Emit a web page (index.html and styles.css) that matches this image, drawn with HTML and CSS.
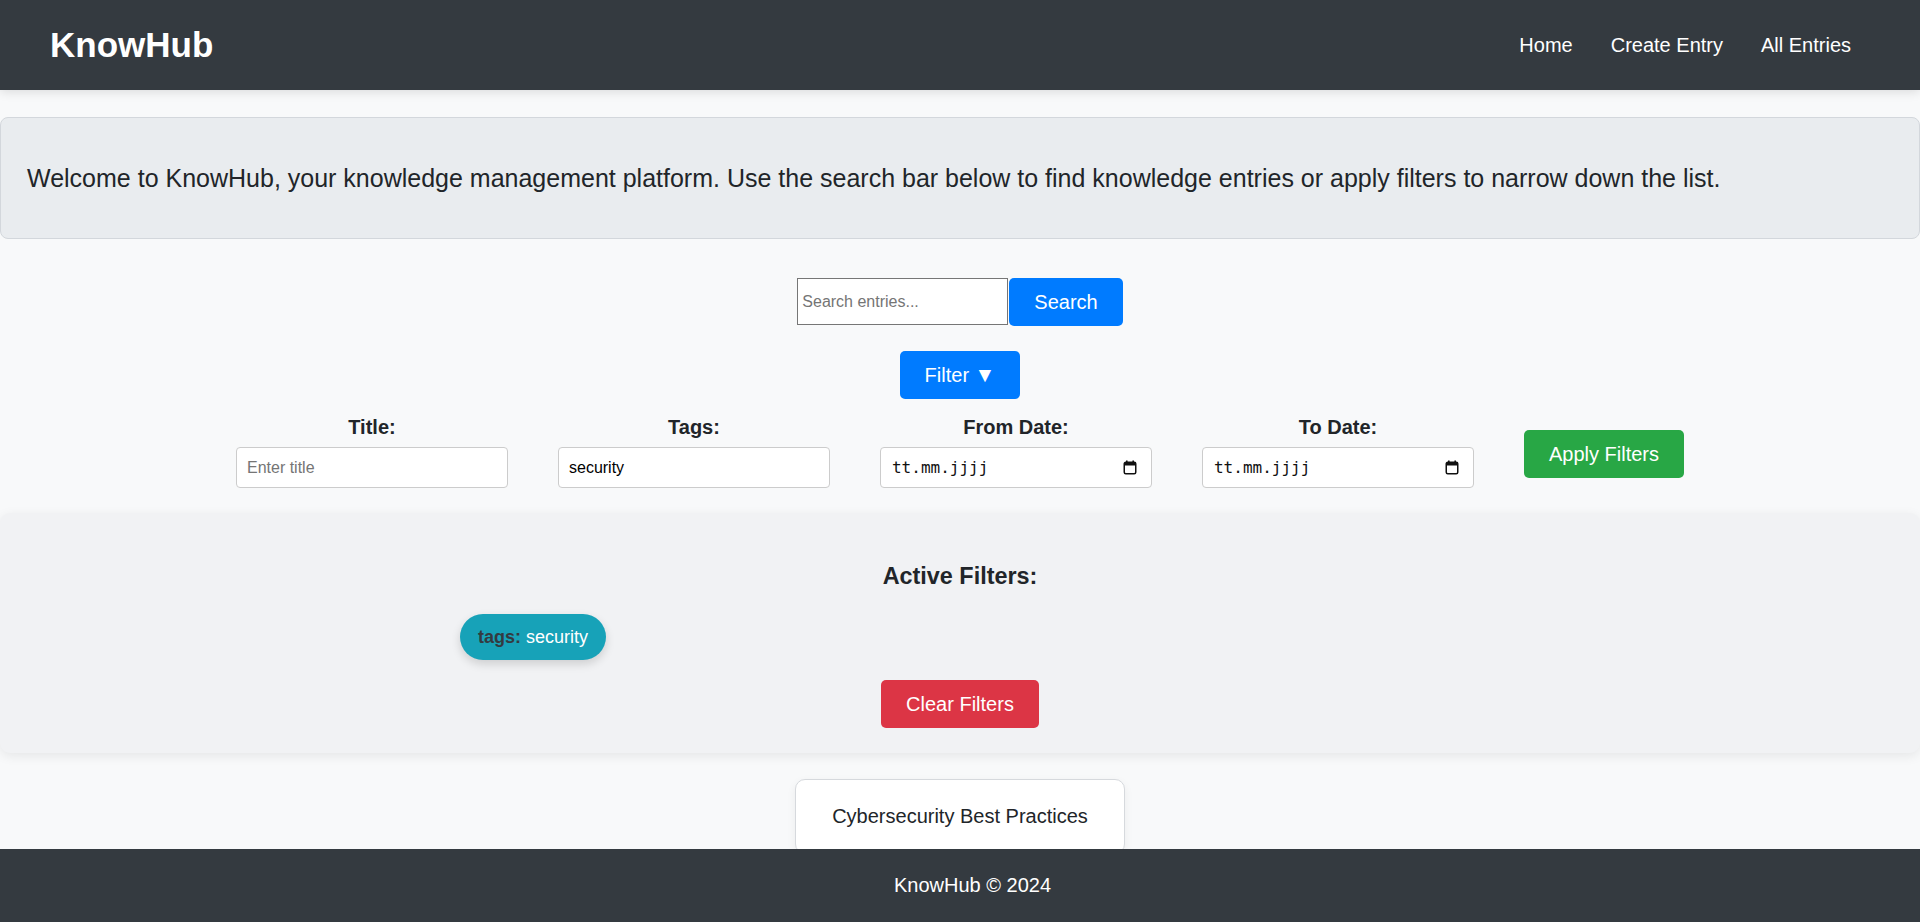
FILE: index.html
```html
<!DOCTYPE html>
<html lang="de">
<head>
<meta charset="utf-8">
<title>KnowHub</title>
<link rel="stylesheet" href="styles.css">
</head>
<body>
<header class="site-header">
  <div class="logo">KnowHub</div>
  <nav class="nav">
    <a href="#" class="nav-link">Home</a>
    <a href="#" class="nav-link">Create Entry</a>
    <a href="#" class="nav-link">All Entries</a>
  </nav>
</header>

<main class="main">
  <section class="welcome">
    <p>Welcome to KnowHub, your knowledge management platform. Use the search bar below to find knowledge entries or apply filters to narrow down the list.</p>
  </section>

  <div class="search-row">
    <input class="search-input" type="text" placeholder="Search entries...">
    <button class="btn btn-blue">Search</button>
  </div>

  <div class="toggle-row">
    <button class="btn btn-blue btn-filter">Filter <span class="caret">▼</span></button>
  </div>

  <div class="filter-row">
    <div class="filter-group">
      <label class="filter-label">Title:</label>
      <input class="field" type="text" placeholder="Enter title">
    </div>
    <div class="filter-group">
      <label class="filter-label">Tags:</label>
      <input class="field" type="text" value="security">
    </div>
    <div class="filter-group">
      <label class="filter-label">From Date:</label>
      <div class="field date-field">
        <span class="date-text">tt.mm.jjjj</span>
        <svg class="cal-icon" width="14" height="15" viewBox="0 0 14 15"><rect x="3" y="0.5" width="1.6" height="3" fill="#111"/><rect x="9.4" y="0.5" width="1.6" height="3" fill="#111"/><rect x="1.25" y="2.25" width="11.5" height="11.5" rx="1.5" fill="none" stroke="#111" stroke-width="1.5"/><rect x="1.5" y="2.5" width="11" height="3" fill="#111"/></svg>
      </div>
    </div>
    <div class="filter-group">
      <label class="filter-label">To Date:</label>
      <div class="field date-field">
        <span class="date-text">tt.mm.jjjj</span>
        <svg class="cal-icon" width="14" height="15" viewBox="0 0 14 15"><rect x="3" y="0.5" width="1.6" height="3" fill="#111"/><rect x="9.4" y="0.5" width="1.6" height="3" fill="#111"/><rect x="1.25" y="2.25" width="11.5" height="11.5" rx="1.5" fill="none" stroke="#111" stroke-width="1.5"/><rect x="1.5" y="2.5" width="11" height="3" fill="#111"/></svg>
      </div>
    </div>
    <button class="btn btn-green">Apply Filters</button>
  </div>

  <section class="active-filters">
    <h3 class="active-title">Active Filters:</h3>
    <div class="chip-list">
      <span class="chip"><b class="chip-key">tags:</b> security</span>
    </div>
    <button class="btn btn-red">Clear Filters</button>
  </section>

  <div class="entries">
    <div class="entry-card">Cybersecurity Best Practices</div>
  </div>
</main>

<footer class="site-footer">KnowHub © 2024</footer>
</body>
</html>
```

FILE: styles.css
```css
* { box-sizing: border-box; }

html, body {
  margin: 0;
  padding: 0;
}

body {
  font-family: "Liberation Sans", Arial, sans-serif;
  background: #f8f9fa;
  color: #212529;
  font-size: 20px;
  padding-bottom: 80px;
}

.site-header {
  height: 90px;
  background: #343a40;
  display: flex;
  align-items: center;
  justify-content: space-between;
  padding: 0 50px;
  box-shadow: 0 2px 10px rgba(0, 0, 0, 0.12);
  position: relative;
}

.logo {
  color: #fff;
  font-weight: bold;
  font-size: 35px;
}

.nav {
  display: flex;
}

.nav-link {
  color: #fff;
  text-decoration: none;
  font-size: 20px;
  padding: 0 19px;
}

.welcome {
  margin-top: 27px;
  background: #e9ecef;
  border: 1px solid #d3d7dc;
  border-radius: 8px;
  padding: 20px 26px;
}

.welcome p {
  margin: 25px 0;
  font-size: 25px;
  line-height: 30px;
}

.search-row {
  display: flex;
  justify-content: center;
  gap: 1px;
  margin-top: 39px;
}

.search-input {
  width: 211px;
  height: 47px;
  border: 1px solid #767676;
  border-radius: 0;
  padding: 0 4px;
  font-family: "Liberation Sans", Arial, sans-serif;
  font-size: 16px;
  background: #fff;
}

.search-input::placeholder { color: #757575; }

.btn {
  border: none;
  border-radius: 5px;
  color: #fff;
  font-family: "Liberation Sans", Arial, sans-serif;
  font-size: 20px;
  line-height: 24px;
  padding: 12px 25px;
  cursor: pointer;
}

.btn-blue { background: #007bff; }
.btn-green { background: #28a745; }
.btn-red { background: #dc3545; }

.btn-filter { width: 120px; padding: 12px 0; }

.caret { font-size: 21px; }

.toggle-row {
  display: flex;
  justify-content: center;
  margin-top: 25px;
}

.filter-row {
  display: flex;
  justify-content: center;
  align-items: center;
  gap: 50px;
  margin-top: 17px;
}

.filter-group {
  display: flex;
  flex-direction: column;
  align-items: center;
  width: 272px;
}

.filter-label {
  font-weight: bold;
  font-size: 20px;
  line-height: 23px;
  margin-bottom: 8px;
  color: #212529;
}

.field {
  width: 272px;
  height: 41px;
  border: 1px solid #ccc;
  border-radius: 4px;
  background: #fff;
  padding: 0 10px;
  font-family: "Liberation Sans", Arial, sans-serif;
  font-size: 16px;
  color: #000;
}

.field::placeholder { color: #757575; }

.date-field {
  display: flex;
  align-items: center;
  justify-content: space-between;
  padding: 0 14px 0 11px;
}

.date-text {
  font-family: "DejaVu Sans Mono", "Liberation Mono", monospace;
  font-size: 16px;
  color: #111;
}

.cal-icon { display: block; }

.btn-green { margin-top: 4px; }

.active-filters {
  margin-top: 25px;
  background: #f1f2f4;
  border-radius: 10px;
  padding: 25px;
  box-shadow: 0 3px 12px rgba(0, 0, 0, 0.08);
  display: flex;
  flex-direction: column;
  align-items: center;
}

.active-title {
  margin: 25px 0 24px;
  font-size: 23.4px;
  line-height: 27px;
}

.chip-list {
  width: 1000px;
  display: flex;
  flex-wrap: wrap;
}

.chip {
  background: #17a2b8;
  color: #fff;
  border-radius: 23px;
  padding: 12px 18px;
  font-size: 18px;
  line-height: 22px;
  box-shadow: 0 4px 10px rgba(0, 0, 0, 0.15);
}

.chip-key { color: #343a40; }

.btn-red { margin-top: 20px; }

.entries {
  display: flex;
  justify-content: center;
  margin-top: 26px;
}

.entry-card {
  width: 330px;
  background: #fff;
  border: 1px solid #d6d9dd;
  border-radius: 10px;
  padding: 25px 20px;
  text-align: center;
  font-size: 20px;
  line-height: 23px;
  box-shadow: 0 3px 10px rgba(0, 0, 0, 0.06);
  color: #212529;
}

.site-footer {
  position: fixed;
  left: 0;
  right: 0;
  bottom: 0;
  height: 73px;
  background: #343a40;
  color: #fff;
  font-size: 20px;
  display: flex;
  align-items: center;
  justify-content: center;
  padding-left: 25px;
}
```
